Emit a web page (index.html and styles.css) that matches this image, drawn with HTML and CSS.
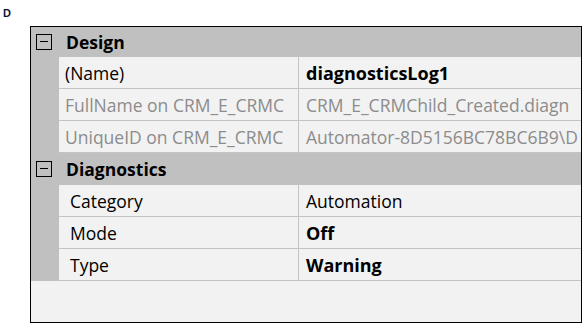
FILE: index.html
```html
<!DOCTYPE html>
<html lang="en">
<head>
  <meta charset="UTF-8">
  <title>Properties</title>
  <link rel="stylesheet" href="styles.css">
</head>
<body>
  <div class="label">D</div>
  <div class="grid">
    <div class="group">
      <span class="toggle"></span>
      <span class="group-title">Design</span>
    </div>
    <div class="row">
      <div class="gutter"></div>
      <div class="name">(Name)</div>
      <div class="value bold">diagnosticsLog1</div>
    </div>
    <div class="row muted">
      <div class="gutter"></div>
      <div class="name">FullName on CRM_E_CRMC</div>
      <div class="value">CRM_E_CRMChild_Created.diagn</div>
    </div>
    <div class="row muted">
      <div class="gutter"></div>
      <div class="name">UniqueID on CRM_E_CRMC</div>
      <div class="value">Automator-8D5156BC78BC6B9\D</div>
    </div>
    <div class="group group-tall">
      <span class="toggle"></span>
      <span class="group-title">Diagnostics</span>
    </div>
    <div class="row indent">
      <div class="gutter"></div>
      <div class="name">Category</div>
      <div class="value">Automation</div>
    </div>
    <div class="row indent">
      <div class="gutter"></div>
      <div class="name">Mode</div>
      <div class="value bold">Off</div>
    </div>
    <div class="row indent">
      <div class="gutter"></div>
      <div class="name">Type</div>
      <div class="value bold">Warning</div>
    </div>
  </div>
</body>
</html>
```

FILE: styles.css
```css
body {
  margin: 0;
  font-family: "Open Sans", "Noto Sans", sans-serif;
  background-color: #fff;
  color: #000;
}
.label {
  font-family: "Liberation Sans", Arial, sans-serif;
  font-weight: bold;
  font-size: 11px;
  color: #10163a;
  padding: 7px 0 0 3px;
  height: 19px;
}
.grid {
  margin-left: 30px;
  width: 550px;
  height: 295px;
  border: 1px solid #000;
  background-color: #f2f2f2;
  overflow: hidden;
}
.group {
  display: flex;
  align-items: center;
  height: 30px;
  background-color: #c0c0c0;
}
.group-tall {
  height: 32px;
}
.toggle {
  position: relative;
  box-sizing: border-box;
  width: 16px;
  height: 16px;
  margin-left: 5px;
  border: 1px solid #000;
}
.toggle::after {
  content: "";
  position: absolute;
  left: 3px;
  right: 3px;
  top: 6px;
  height: 1px;
  background-color: #000;
}
.group-title {
  margin-left: 14px;
  font-weight: bold;
  font-size: 17.5px;
}
.row {
  display: grid;
  grid-template-columns: 28px 240px 282px;
  height: 32px;
  font-size: 17.5px;
}
.gutter {
  background-color: #c0c0c0;
}
.name, .value {
  display: flex;
  align-items: center;
  white-space: nowrap;
  overflow: hidden;
  border-bottom: 1px solid #c4c4c4;
}
.name {
  padding-left: 6px;
  border-right: 1px solid #c4c4c4;
}
.value {
  padding-left: 7px;
}
.indent .name {
  padding-left: 11px;
}
.bold {
  font-weight: bold;
  font-size: 18px;
}
.muted .name, .muted .value {
  color: #8c8c8c;
}
```
